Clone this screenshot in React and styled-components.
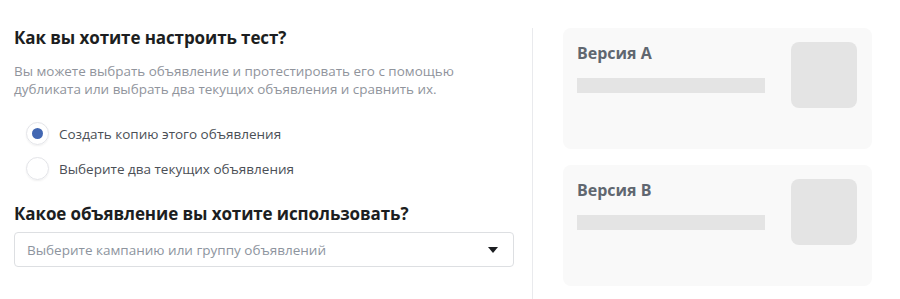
import React from "react"
import styled, { createGlobalStyle } from "styled-components"

const GlobalStyle = createGlobalStyle`
  html, body {
    margin: 0;
    padding: 0;
    background: #ffffff;
    font-family: "Open Sans", "Noto Sans", sans-serif;
  }
`

const Page = styled.div`
  display: flex;
  height: 299px;
  overflow: hidden;
  padding-left: 14px;
  box-sizing: border-box;
`

const Setup = styled.section`
  width: 500px;
  padding-top: 27px;
`

const Heading = styled.h2`
  margin: 0;
  font-size: 17px;
  line-height: 22px;
  font-weight: 700;
  color: #1c1e21;
  letter-spacing: -0.1px;
`

const Hint = styled.p`
  margin: 13px 0 0;
  font-size: 13.45px;
  line-height: 18px;
  color: #90949c;
`

const Options = styled.div`
  display: flex;
  flex-direction: column;
  gap: 12px;
  margin: 24px 0 0 12px;
`

const Option = styled.label`
  display: flex;
  align-items: center;
  gap: 10px;
  font-size: 13.5px;
  color: #4b4f56;
  cursor: pointer;
`

const Radio = styled.span`
  width: 23px;
  height: 23px;
  border-radius: 50%;
  border: 1px solid #e3e4e8;
  box-shadow: 0 1px 2px rgba(0, 0, 0, 0.06);
  box-sizing: border-box;
  display: flex;
  align-items: center;
  justify-content: center;

  &::after {
    content: "";
    width: 11px;
    height: 11px;
    border-radius: 50%;
    background: ${p => (p.$checked ? "#4267b2" : "transparent")};
  }
`

const SubHeading = styled(Heading)`
  margin-top: 23px;
`

const Select = styled.div`
  margin-top: 7px;
  height: 35px;
  border: 1px solid #dddfe2;
  border-radius: 4px;
  box-sizing: border-box;
  display: flex;
  align-items: center;
  justify-content: space-between;
  padding: 0 15px 0 12px;
  font-size: 13.5px;
  color: #8d949e;
`

const Caret = styled.span`
  width: 0;
  height: 0;
  border-left: 5px solid transparent;
  border-right: 5px solid transparent;
  border-top: 6px solid #1c1e21;
`

const Divider = styled.div`
  width: 1px;
  background: #e9eaed;
  margin: 28px 0 0 18px;
`

const Preview = styled.aside`
  display: flex;
  flex-direction: column;
  gap: 16px;
  padding: 28px 0 0 30px;
`

const Card = styled.div`
  width: 309px;
  height: 121px;
  box-sizing: border-box;
  background: #f9f9f9;
  border-radius: 8px;
  padding: 14px 15px 0 14px;
  display: flex;
  justify-content: space-between;
`

const CardText = styled.div`
  display: flex;
  flex-direction: column;
`

const CardTitle = styled.div`
  font-size: 16px;
  line-height: 22px;
  font-weight: 700;
  color: #606770;
`

const Bar = styled.div`
  width: 188px;
  height: 15px;
  margin-top: 14px;
  background: #e4e4e4;
`

const Thumb = styled.div`
  width: 66px;
  height: 66px;
  border-radius: 8px;
  background: #e4e4e4;
`

const versions = ["Версия A", "Версия B"]

const App = () => (
  <>
    <GlobalStyle />
    <Page>
      <Setup>
        <Heading>Как вы хотите настроить тест?</Heading>
        <Hint>
          Вы можете выбрать объявление и протестировать его с помощью
          <br />
          дубликата или выбрать два текущих объявления и сравнить их.
        </Hint>
        <Options>
          <Option>
            <Radio $checked />
            Создать копию этого объявления
          </Option>
          <Option>
            <Radio />
            Выберите два текущих объявления
          </Option>
        </Options>
        <SubHeading>Какое объявление вы хотите использовать?</SubHeading>
        <Select>
          Выберите кампанию или группу объявлений
          <Caret />
        </Select>
      </Setup>
      <Divider />
      <Preview>
        {versions.map(v => (
          <Card key={v}>
            <CardText>
              <CardTitle>{v}</CardTitle>
              <Bar />
            </CardText>
            <Thumb />
          </Card>
        ))}
      </Preview>
    </Page>
  </>
)

export default App
